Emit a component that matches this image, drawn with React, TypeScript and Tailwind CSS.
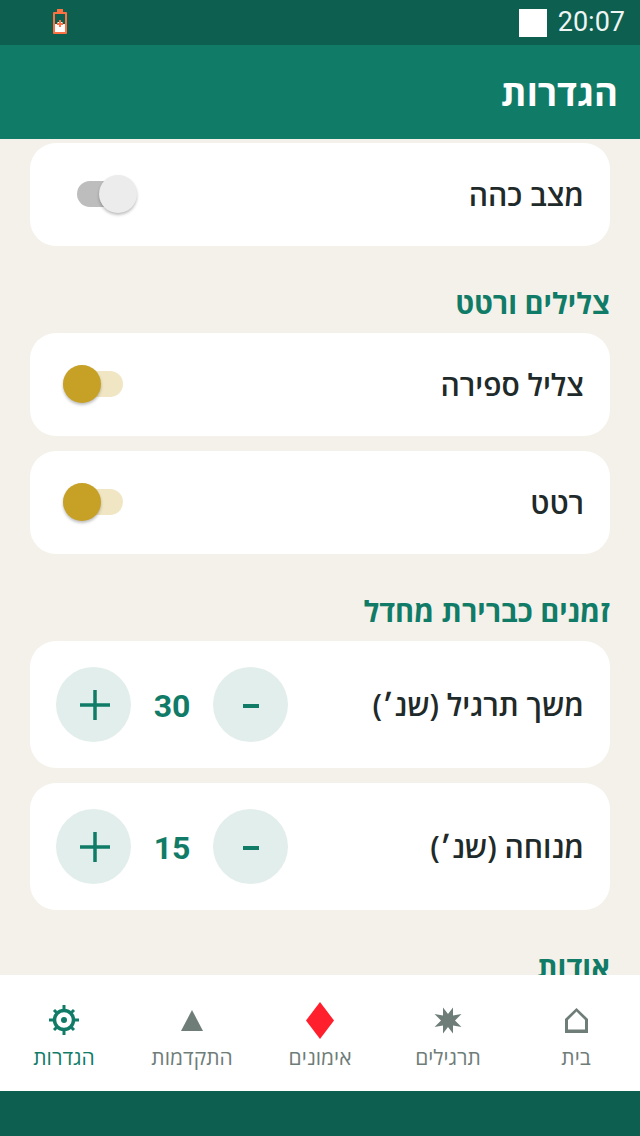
import React from 'react';

const font = { fontFamily: '"Open Sans", Roboto, sans-serif' };

function Toggle({ on }: { on: boolean }) {
  return (
    <div className={`relative mb-[1px] h-[38px] w-[60px] ${on ? 'ml-[33px]' : 'ml-[47px]'}`}>
      <div
        className={`absolute top-[6px] h-[26px] rounded-full ${
          on ? 'left-0 w-[60px] bg-[#f0e6c4]' : 'left-0 w-[48px] bg-[#bdbdbd]'
        }`}
      />
      <div
        className={`absolute top-0 h-[38px] w-[38px] rounded-full shadow-[0_2px_3px_rgba(0,0,0,0.25)] ${
          on ? 'left-0 bg-[#c7a026]' : 'left-[22px] bg-[#ececec]'
        }`}
      />
    </div>
  );
}

function ToggleRow({ label, on }: { label: string; on: boolean }) {
  return (
    <div className="flex h-[103px] items-center justify-between rounded-[26px] bg-white pr-[26px]">
      <span className="text-[30px] font-semibold text-[#1f2a2a]">{label}</span>
      <Toggle on={on} />
    </div>
  );
}

function Stepper({ label, value }: { label: string; value: number }) {
  return (
    <div className="flex h-[127px] items-center justify-between rounded-[26px] bg-white pl-[26px] pr-[26px]">
      <span className="text-[30px] font-semibold text-[#1f2a2a]">{label}</span>
      <div dir="ltr" className="flex items-center">
        <button className="flex h-[75px] w-[75px] items-center justify-center rounded-full bg-[#e2eeeb]">
          <svg width="30" height="30" viewBox="0 0 30 30" className="mt-[1px] ml-[2px]">
            <path d="M15 0v30M0 15h30" stroke="#107c68" strokeWidth="3.500" />
          </svg>
        </button>
        <span className="w-[82px] pt-[3px] text-center font-['Roboto'] text-[32px] font-bold text-[#107c68]">{value}</span>
        <button className="flex h-[75px] w-[75px] items-center justify-center rounded-full bg-[#e2eeeb]">
          <span className="mt-[3px] h-[4px] w-[16px] bg-[#107c68]" />
        </button>
      </div>
    </div>
  );
}

function SectionTitle({ children }: { children: React.ReactNode }) {
  return <h2 className="text-[29px] font-bold leading-[40px] text-[#107c68]">{children}</h2>;
}

function HomeIcon() {
  return (
    <svg width="23" height="25" viewBox="0 0 23 25">
      <path
        fillRule="evenodd"
        d="M11.500 0 L23 11 V25 H0 V11 Z M11.500 3.500 L3 12 V21.500 H20 V12 Z"
        fill="#6f7d79"
      />
    </svg>
  );
}

function BurstIcon() {
  return (
    <svg width="28" height="27" viewBox="0 0 28 27">
      <path
        d="M9 0.500 L14 7 L19 0.500 L19 8.500 L27.500 7 L21 13.500 L27.500 20 L19 18.500 L19 26.500 L14 20 L9 26.500 L9 18.500 L0.500 20 L7 13.500 L0.500 7 L9 8.500 Z"
        fill="#6f7d79"
      />
    </svg>
  );
}

function DiamondIcon() {
  return (
    <svg width="28" height="37" viewBox="0 0 28 37">
      <path d="M14 0 L28 18.500 L14 37 L0 18.500 Z" fill="#ff1f2d" />
    </svg>
  );
}

function TriangleIcon() {
  return (
    <svg width="22" height="21" viewBox="0 0 22 21">
      <path d="M11 0 L22 21 H0 Z" fill="#6f7d79" />
    </svg>
  );
}

function GearIcon() {
  return (
    <svg width="30" height="30" viewBox="0 0 30 30" className="ml-[-1px]">
      <circle cx="15" cy="15" r="9.500" fill="none" stroke="#107c68" strokeWidth="3.500" />
      <circle cx="15" cy="15" r="3" fill="#107c68" />
      <path
        d="M15 0v5M15 25v5M0 15h5M25 15h5M5 5l3 3M22 22l3 3M25 5l-3 3M8 22l-3 3"
        stroke="#107c68"
        strokeWidth="3"
      />
    </svg>
  );
}

const tabs = [
  { label: 'בית', icon: <HomeIcon />, active: false },
  { label: 'תרגילים', icon: <BurstIcon />, active: false },
  { label: 'אימונים', icon: <DiamondIcon />, active: false },
  { label: 'התקדמות', icon: <TriangleIcon />, active: false },
  { label: 'הגדרות', icon: <GearIcon />, active: true },
];

export default function App() {
  return (
    <div dir="rtl" style={font} className="flex h-[1136px] w-[640px] flex-col overflow-hidden bg-[#f4f1ea]">
      {/* Status bar */}
      <div dir="ltr" className="flex h-[45px] shrink-0 items-center bg-[#0d5f50] pl-[53px] pr-[15px]">
        <svg width="14" height="25" viewBox="0 0 14 25" className="mb-[2px]">
          <path d="M4 0h6v3H4z" fill="#ff7043" />
          <rect x="0" y="3" width="14" height="22" rx="1" fill="#ff7043" />
          <rect x="2" y="5" width="10" height="18" fill="#0d5f50" />
          <path d="M2 15h2.500v-2h5v2h2.500v8h-10z" fill="#fff" />
          <path d="M6 11h2v3h2v2h-2v2h-2v-2h-2v-2h2z" fill="#ff7043" />
        </svg>
        <div className="ml-auto h-[28px] w-[28px] bg-white" />
        <span className="ml-[11px] font-['Roboto'] text-[27px] text-[#eef5f3]">20:07</span>
      </div>

      {/* Header */}
      <div className="flex h-[94px] shrink-0 items-center bg-[#107c68] px-[22px]">
        <h1 className="text-[36.500px] font-bold text-white">הגדרות</h1>
      </div>

      {/* Content */}
      <div className="min-h-0 flex-1 overflow-hidden px-[30px] pt-[4px]">
        <ToggleRow label="מצב כהה" on={false} />
        <div className="mt-[37px] mb-[10px]">
          <SectionTitle>צלילים ורטט</SectionTitle>
        </div>
        <div className="flex flex-col gap-[15px]">
          <ToggleRow label="צליל ספירה" on />
          <ToggleRow label="רטט" on />
        </div>
        <div className="mt-[37px] mb-[10px]">
          <SectionTitle>זמנים כברירת מחדל</SectionTitle>
        </div>
        <div className="flex flex-col gap-[15px]">
          <Stepper label="משך תרגיל (שנ׳)" value={30} />
          <Stepper label="מנוחה (שנ׳)" value={15} />
        </div>
        <div className="mt-[37px]">
          <SectionTitle>אודות</SectionTitle>
        </div>
      </div>

      {/* Bottom navigation */}
      <nav className="flex h-[116px] shrink-0 items-start bg-white pt-[25px]">
        {tabs.map((tab) => (
          <div key={tab.label} className="flex flex-1 flex-col items-center">
            <div className="flex h-[40px] items-center justify-center">{tab.icon}</div>
            <span className={`mt-[2px] text-[21px] leading-[30px] ${tab.active ? 'text-[#107c68]' : 'text-[#6f7d79]'}`}>
              {tab.label}
            </span>
          </div>
        ))}
      </nav>

      {/* System nav bar */}
      <div className="h-[45px] shrink-0 bg-[#0d5f50]" />
    </div>
  );
}
